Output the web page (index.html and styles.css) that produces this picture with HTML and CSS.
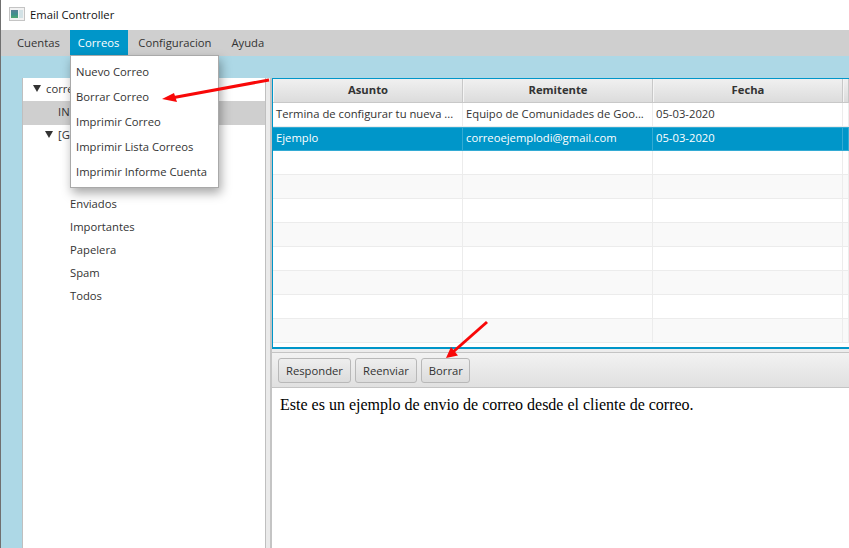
FILE: index.html
```html
<!DOCTYPE html>
<html lang="es">
<head>
<meta charset="utf-8">
<title>Email Controller</title>
<link rel="stylesheet" href="styles.css">
</head>
<body>
<div class="window">
  <header class="titlebar">
    <svg class="app-icon" width="16" height="14" viewBox="0 0 16 14">
      <defs>
        <linearGradient id="pane" x1="0" y1="0" x2="0" y2="1">
          <stop offset="0" stop-color="#5a7f96"/>
          <stop offset="0.55" stop-color="#3f8f8c"/>
          <stop offset="1" stop-color="#4fa86e"/>
        </linearGradient>
      </defs>
      <rect x="0.5" y="0.5" width="15" height="13" fill="#f2f2f2" stroke="#c4c4c4"/>
      <rect x="2" y="3" width="7" height="8" fill="url(#pane)"/>
      <rect x="10" y="3" width="4" height="8" fill="#d3e2e6"/>
    </svg>
    <span>Email Controller</span>
  </header>
  <nav class="menubar">
    <span class="menu">Cuentas</span>
    <span class="menu active">Correos</span>
    <span class="menu">Configuracion</span>
    <span class="menu">Ayuda</span>
  </nav>
  <main class="content">
    <section class="tree">
      <div class="node lvl0"><i class="caret"></i><span>corre</span></div>
      <div class="node lvl1 selected"><span>IN</span></div>
      <div class="node lvl1b"><i class="caret"></i><span>[G</span></div>
      <div class="node lvl2"></div>
      <div class="node lvl2"></div>
      <div class="node lvl2"><span>Enviados</span></div>
      <div class="node lvl2"><span>Importantes</span></div>
      <div class="node lvl2"><span>Papelera</span></div>
      <div class="node lvl2"><span>Spam</span></div>
      <div class="node lvl2"><span>Todos</span></div>
    </section>
    <div class="splitter"></div>
    <section class="detail">
      <div class="table">
        <div class="thead">
          <div class="th">Asunto</div><div class="th">Remitente</div><div class="th">Fecha</div><div class="th filler"></div>
        </div>
        <div class="tr"><div class="td">Termina de configurar tu nueva ...</div><div class="td">Equipo de Comunidades de Goo...</div><div class="td">05-03-2020</div><div class="td filler"></div></div>
        <div class="tr sel"><div class="td">Ejemplo</div><div class="td">correoejemplodi@gmail.com</div><div class="td">05-03-2020</div><div class="td filler"></div></div>
        <div class="tr"><div class="td"></div><div class="td"></div><div class="td"></div><div class="td filler"></div></div>
        <div class="tr odd"><div class="td"></div><div class="td"></div><div class="td"></div><div class="td filler"></div></div>
        <div class="tr"><div class="td"></div><div class="td"></div><div class="td"></div><div class="td filler"></div></div>
        <div class="tr odd"><div class="td"></div><div class="td"></div><div class="td"></div><div class="td filler"></div></div>
        <div class="tr"><div class="td"></div><div class="td"></div><div class="td"></div><div class="td filler"></div></div>
        <div class="tr odd"><div class="td"></div><div class="td"></div><div class="td"></div><div class="td filler"></div></div>
        <div class="tr"><div class="td"></div><div class="td"></div><div class="td"></div><div class="td filler"></div></div>
        <div class="tr odd"><div class="td"></div><div class="td"></div><div class="td"></div><div class="td filler"></div></div>
      </div>
      <div class="hsplit"></div>
      <div class="toolbar">
        <button class="btn">Responder</button>
        <button class="btn">Reenviar</button>
        <button class="btn btn-narrow">Borrar</button>
      </div>
      <div class="message">Este es un ejemplo de envio de correo desde el cliente de correo.</div>
    </section>
  </main>
  <div class="popup">
    <div class="item">Nuevo Correo</div>
    <div class="item">Borrar Correo</div>
    <div class="item">Imprimir Correo</div>
    <div class="item">Imprimir Lista Correos</div>
    <div class="item">Imprimir Informe Cuenta</div>
  </div>
  <svg class="arrows" width="849" height="548" viewBox="0 0 849 548">
    <path d="M269 80 L174 97.5" stroke="#f80808" stroke-width="3" fill="none"/>
    <path d="M162 99 L174 93 L177 102 Z" fill="#f80808"/>
    <path d="M487 322 L453 352" stroke="#f80808" stroke-width="3" fill="none"/>
    <path d="M446 358 L451 347 L458 355.5 Z" fill="#f80808"/>
  </svg>
</div>
</body>
</html>
```

FILE: styles.css
```css
* { box-sizing: border-box; }
html, body { margin: 0; padding: 0; }
body { width: 849px; height: 548px; overflow: hidden; font-family: "Open Sans", "Noto Sans", sans-serif; font-size: 11.25px; color: #333; }
.window { position: relative; width: 849px; height: 548px; display: flex; flex-direction: column; background: #add8e6; border-left: 1px solid #707070; overflow: hidden; }

.titlebar { flex: 0 0 30px; background: #fff; display: flex; align-items: center; gap: 5px; padding: 0 0 2px 8px; color: #111; }
.app-icon { display: block; }

.menubar { flex: 0 0 25px; background: #cfcfcf; display: flex; padding-left: 6px; }
.menu { padding: 0 10px; line-height: 26px; color: #333; }
.menu.active { background: #0096c9; color: #fff; padding: 0 9px 0 8px; }

.content { flex: 1; display: flex; padding: 22px 0 0 21px; min-height: 0; }

.tree { flex: 0 0 244px; background: #fff; border-left: 1px solid #bfbfbf; border-right: 1px solid #bfbfbf; }
.node { height: 23px; padding-bottom: 3px; display: flex; align-items: center; white-space: nowrap; overflow: hidden; }
.node.lvl0 { padding-left: 10px; }
.node.lvl0 span { margin-left: 5px; }
.node.lvl1 { padding-left: 35px; }
.node.lvl1b { padding-left: 22px; }
.node.lvl1b span { margin-left: 5px; }
.node.lvl2 { padding-left: 47px; }
.node.selected { background: #cfcfcf; height: 24px; margin-bottom: -1px; }
.caret { width: 0; height: 0; border-left: 4px solid transparent; border-right: 4px solid transparent; border-top: 7px solid #333; display: block; }

.splitter { flex: 0 0 6px; background: #eaeaea; border-right: 2px solid #c4c4c4; }

.detail { flex: 1; min-width: 0; display: flex; flex-direction: column; background: #fff; }

.table { flex: 0 0 271px; border: solid #0096c9; border-width: 1px 0 2px 1px; background: #fff; overflow: hidden; }
.thead { display: flex; height: 24px; background: linear-gradient(#f0f0f0, #dcdcdc); border-bottom: 1px solid #c8c8c8; }
.th { flex: 0 0 190px; text-align: center; font-weight: 700; line-height: 22px; color: #333; border-right: 1px solid #c8c8c8; border-left: 1px solid #f4f4f4; }
.tr { display: flex; height: 24px; background: #fff; }
.tr.odd { background: #f9f9f9; }
.td { flex: 0 0 190px; padding-left: 3px; line-height: 22px; border-right: 1px solid #ececec; border-bottom: 1px solid #ececec; white-space: nowrap; overflow: hidden; color: #333; }
.th.filler, .td.filler { flex: 1; }
.tr.sel { background: #0096c9; }
.tr.sel .td { color: #fff; border-right-color: #33abd4; border-bottom-color: #33abd4; border-top: 1px solid #33abd4; line-height: 20px; }

.hsplit { flex: 0 0 4px; background: #ececec; border-bottom: 1px solid #c4c4c4; }

.toolbar { flex: 0 0 35px; display: flex; align-items: center; gap: 4px; padding: 0 6px; background: linear-gradient(#f2f2f2, #e0e0e0); border-bottom: 1px solid #c4c4c4; }
.btn { height: 25px; padding: 0 7px; font: inherit; color: #333; border: 1px solid #b8b8b8; border-radius: 3px; background: linear-gradient(#eeeeee, #dcdcdc); }
.btn-narrow { padding: 0 6px 0 7px; }

.message { flex: 1; padding: 8px 8px; font-family: "Liberation Serif", serif; font-size: 16px; color: #000; background: #fff; }

.popup { position: absolute; left: 69px; top: 55px; width: 149px; height: 133px; background: #fff; border: 1px solid #a9a9a9; box-shadow: 2px 5px 10px rgba(0,0,0,0.35); padding: 3px 0; }
.item { height: 25px; line-height: 25px; padding-left: 5px; color: #333; white-space: nowrap; }

.arrows { position: absolute; left: -1px; top: 0; pointer-events: none; }
```
